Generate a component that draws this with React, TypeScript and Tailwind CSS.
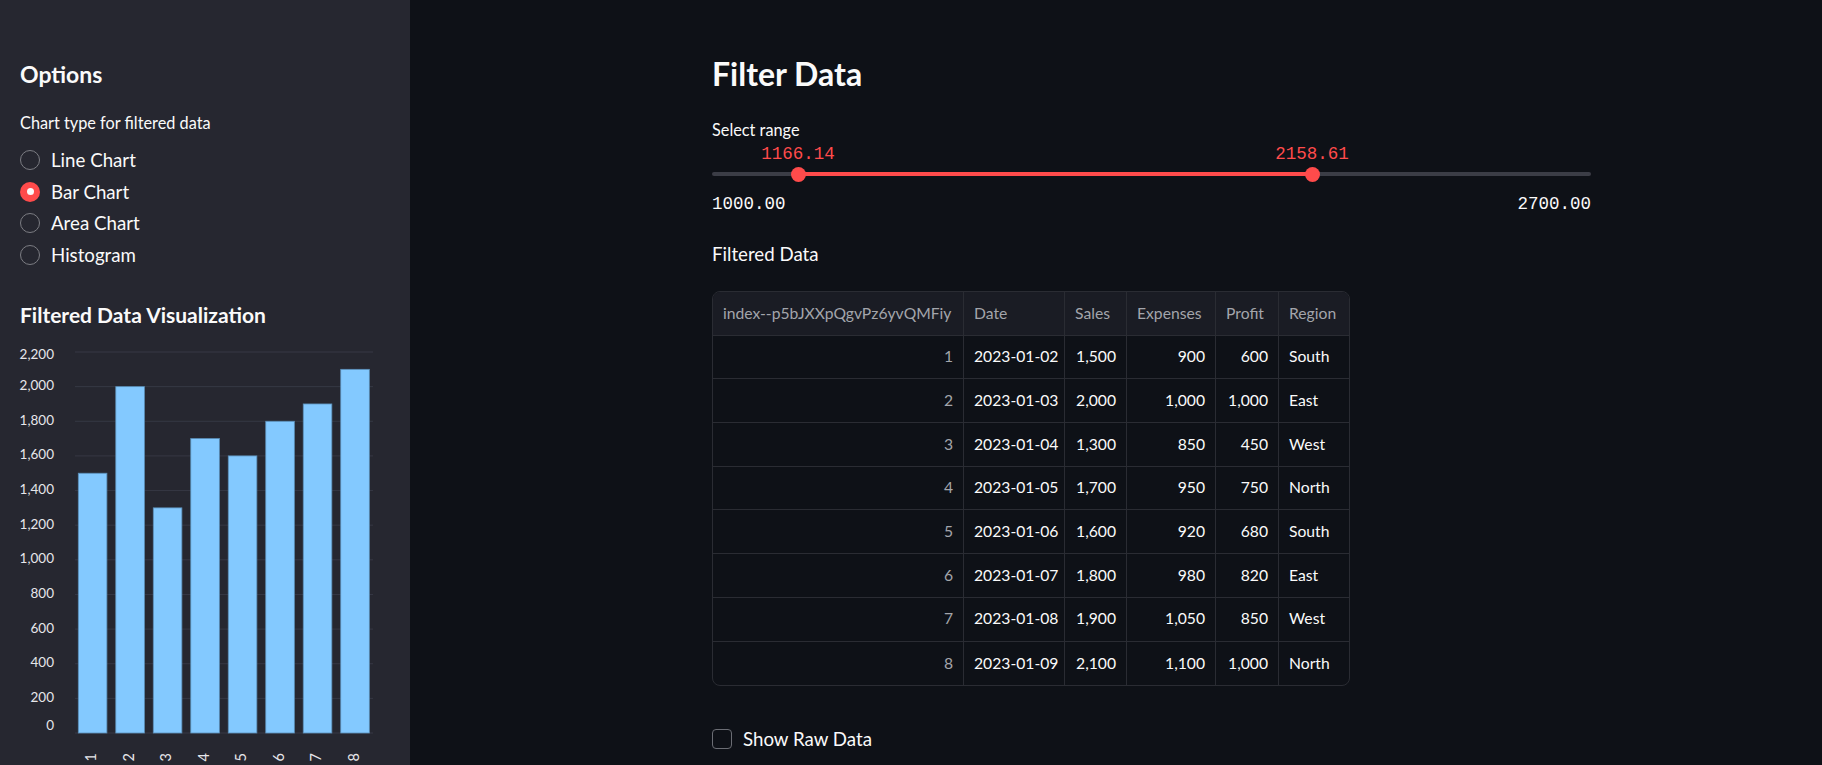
import React from "react";

const opts = ["Line Chart", "Bar Chart", "Area Chart", "Histogram"];
const values = [1500, 2000, 1300, 1700, 1600, 1800, 1900, 2100];
const ticks = [0, 200, 400, 600, 800, 1000, 1200, 1400, 1600, 1800, 2000, 2200];

const rows: string[][] = [
  ["1", "2023-01-02", "1,500", "900", "600", "South"],
  ["2", "2023-01-03", "2,000", "1,000", "1,000", "East"],
  ["3", "2023-01-04", "1,300", "850", "450", "West"],
  ["4", "2023-01-05", "1,700", "950", "750", "North"],
  ["5", "2023-01-06", "1,600", "920", "680", "South"],
  ["6", "2023-01-07", "1,800", "980", "820", "East"],
  ["7", "2023-01-08", "1,900", "1,050", "850", "West"],
  ["8", "2023-01-09", "2,100", "1,100", "1,000", "North"],
];

const headers = ["index--p5bJXXpQgvPz6yvQMFiy", "Date", "Sales", "Expenses", "Profit", "Region"];

function yOf(v: number) {
  return 733 - v * 0.17318;
}

function fmt(v: number) {
  return v.toLocaleString("en-US");
}

function Chart() {
  return (
    <svg className="-ml-5 shrink-0" width={410} height={435} viewBox="0 330 410 435">
      {ticks.map((t) => (
        <line key={t} x1={75} x2={373} y1={yOf(t)} y2={yOf(t)} stroke="#363844" strokeWidth={1} />
      ))}
      {ticks.map((t, i) => {
        let dy = 0;
        if (i === ticks.length - 1) dy = 4;
        if (i === 0) dy = -6;
        return (
          <text
            key={"l" + t}
            x={54}
            y={yOf(t) + dy}
            textAnchor="end"
            dominantBaseline="middle"
            fill="#e6e6ea"
            fontSize={13.5}
            fontFamily="Lato, sans-serif"
          >
            {fmt(t)}
          </text>
        );
      })}
      {values.map((v, i) => {
        const x = 78.3 + 37.49 * i;
        const y = yOf(v);
        return (
          <rect
            key={i}
            x={x}
            y={y}
            width={28.6}
            height={733 - y}
            fill="#83c9ff"
            stroke="#5b8fb8"
            strokeWidth={0.8}
          />
        );
      })}
      {values.map((_, i) => {
        const cx = 78.3 + 37.49 * i + 14.3;
        return (
          <text
            key={"x" + i}
            x={cx}
            y={753}
            textAnchor="end"
            dominantBaseline="middle"
            transform={`rotate(-90 ${cx} 753)`}
            fill="#e6e6ea"
            fontSize={14.5}
            fontFamily="Lato, sans-serif"
          >
            {i + 1}
          </text>
        );
      })}
    </svg>
  );
}

export default function App() {
  return (
    <div className="flex h-[765px] w-full overflow-hidden bg-[#0e1117] text-[#fafafa] font-['Lato',sans-serif]">
      <aside className="flex w-[410px] shrink-0 flex-col bg-[#262730] pl-5 pt-[58px]">
        <h2 className="text-[23px] font-bold leading-[32px]">Options</h2>
        <div className="mt-[21px] text-[16.3px] leading-[24px]">Chart type for filtered data</div>
        <div className="mt-[9px] flex flex-col">
          {opts.map((o) => {
            const sel = o === "Bar Chart";
            return (
              <div key={o} className="flex h-[31.7px] items-center gap-[11px]">
                {sel ? (
                  <div className="flex h-5 w-5 items-center justify-center rounded-full bg-[#ff4b4b]">
                    <div className="h-[7px] w-[7px] rounded-full bg-[#fafafa]" />
                  </div>
                ) : (
                  <div className="h-5 w-5 rounded-full border-[1.5px] border-[#7c7d83]" />
                )}
                <span className="text-[18.7px] leading-[24px]">{o}</span>
              </div>
            );
          })}
        </div>
        <h3 className="mt-[29px] text-[21px] font-bold leading-[30px]">Filtered Data Visualization</h3>
        <Chart />
      </aside>

      <main className="flex-1 pl-[302px] pt-[52px]">
        <div className="flex w-[879px] flex-col">
          <h1 className="text-[32px] font-bold leading-[44px]">Filter Data</h1>
          <div className="mt-[22px] text-[16.3px] leading-[24px]">Select range</div>

          <div className="relative h-[50px] font-['Liberation_Mono',monospace] text-[17.5px]">
            <div className="absolute left-0 right-0 top-[30px] h-1 rounded-full bg-[#3b3d46]" />
            <div className="absolute left-[86px] top-[30px] h-1 w-[514px] bg-[#ff4b4b]" />
            <div className="absolute left-[78.5px] top-[24.5px] h-[15px] w-[15px] rounded-full bg-[#ff4b4b]" />
            <div className="absolute left-[592.5px] top-[24.5px] h-[15px] w-[15px] rounded-full bg-[#ff4b4b]" />
            <div className="absolute left-[86px] top-0 -translate-x-1/2 leading-[24px] text-[#ff4b4b]">1166.14</div>
            <div className="absolute left-[600px] top-0 -translate-x-1/2 leading-[24px] text-[#ff4b4b]">2158.61</div>
          </div>
          <div className="flex justify-between font-['Liberation_Mono',monospace] text-[17.5px] leading-[24px]">
            <span>1000.00</span>
            <span>2700.00</span>
          </div>

          <div className="mt-[26px] text-[18.7px] leading-[24px]">Filtered Data</div>

          <div className="mt-[25px] w-[638px] overflow-hidden rounded-lg border border-[#2a2c33] text-[15.7px]">
            <div className="grid h-[43.7px] grid-cols-[251px_101px_62px_89px_63px_70px] border-b border-[#2a2c33] bg-[#1a1c24] text-[#a3a5ab]">
              {headers.map((h, i) => (
                <div
                  key={h}
                  className={
                    "flex items-center overflow-hidden whitespace-nowrap px-[10px] " +
                    (i < 5 ? "border-r border-[#2a2c33]" : "")
                  }
                >
                  {h}
                </div>
              ))}
            </div>
            {rows.map((r, ri) => (
              <div
                key={ri}
                className={
                  "grid h-[43.7px] grid-cols-[251px_101px_62px_89px_63px_70px] " +
                  (ri < rows.length - 1 ? "border-b border-[#2a2c33]" : "")
                }
              >
                {r.map((c, ci) => {
                  const right = ci === 0 || ci === 2 || ci === 3 || ci === 4;
                  return (
                    <div
                      key={ci}
                      className={
                        "flex items-center whitespace-nowrap px-[10px] " +
                        (right ? "justify-end " : "justify-start ") +
                        (ci === 0 ? "text-[#a3a5ab] " : "text-[#fafafa] ") +
                        (ci < 5 ? "border-r border-[#2a2c33]" : "")
                      }
                    >
                      {c}
                    </div>
                  );
                })}
              </div>
            ))}
          </div>

          <div className="mt-[41px] flex h-6 items-center gap-[11px]">
            <div className="h-5 w-5 rounded-[4px] border-[1.5px] border-[#6b6d74]" />
            <span className="text-[18.7px] leading-[24px]">Show Raw Data</span>
          </div>
        </div>
      </main>
    </div>
  );
}
